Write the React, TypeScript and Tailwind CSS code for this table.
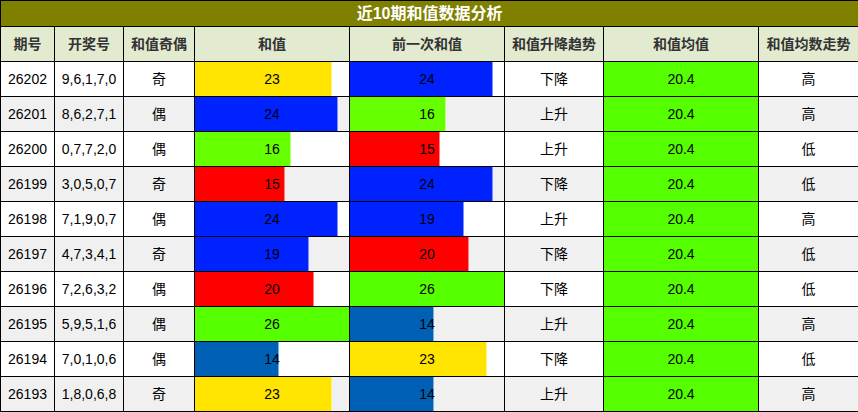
const rows = [
  { qh: "26202", kj: "9,6,1,7,0", jo: "奇", hz: 23, prev: 24, trend: "下降", avg: "20.4", hl: "高" },
  { qh: "26201", kj: "8,6,2,7,1", jo: "偶", hz: 24, prev: 16, trend: "上升", avg: "20.4", hl: "高" },
  { qh: "26200", kj: "0,7,7,2,0", jo: "偶", hz: 16, prev: 15, trend: "上升", avg: "20.4", hl: "低" },
  { qh: "26199", kj: "3,0,5,0,7", jo: "奇", hz: 15, prev: 24, trend: "下降", avg: "20.4", hl: "低" },
  { qh: "26198", kj: "7,1,9,0,7", jo: "偶", hz: 24, prev: 19, trend: "上升", avg: "20.4", hl: "高" },
  { qh: "26197", kj: "4,7,3,4,1", jo: "奇", hz: 19, prev: 20, trend: "下降", avg: "20.4", hl: "低" },
  { qh: "26196", kj: "7,2,6,3,2", jo: "偶", hz: 20, prev: 26, trend: "下降", avg: "20.4", hl: "低" },
  { qh: "26195", kj: "5,9,5,1,6", jo: "偶", hz: 26, prev: 14, trend: "上升", avg: "20.4", hl: "高" },
  { qh: "26194", kj: "7,0,1,0,6", jo: "偶", hz: 14, prev: 23, trend: "下降", avg: "20.4", hl: "低" },
  { qh: "26193", kj: "1,8,0,6,8", jo: "奇", hz: 23, prev: 14, trend: "上升", avg: "20.4", hl: "高" },
];

const barColor: Record<number, string> = {
  14: "bg-[#0060b6]",
  15: "bg-[#ff0000]",
  16: "bg-[#66ff00]",
  19: "bg-[#0022ff]",
  20: "bg-[#ff0000]",
  23: "bg-[#ffe400]",
  24: "bg-[#0022ff]",
  26: "bg-[#55ff00]",
};

const MAX = 26;

function BarCell({ value }: { value: number }) {
  return (
    <td className="border border-black p-0">
      <div className="relative h-[34px] flex items-center justify-center overflow-hidden">
        <div
          className={`absolute left-0 top-0 bottom-0 border-r border-white/50 ${barColor[value]}`}
          style={{ width: `calc(${(value / MAX) * 100}% + 1px)` }}
        />
        <span className="relative">{value}</span>
      </div>
    </td>
  );
}

const heads = ["期号", "开奖号", "和值奇偶", "和值", "前一次和值", "和值升降趋势", "和值均值", "和值均数走势"];

export default function App() {
  return (
    <div className="w-[858px] h-[412px] bg-white font-['Liberation_Sans','Noto_Sans_CJK_SC',sans-serif]">
      <table className="w-[858px] table-fixed border-collapse text-[14px] text-black text-center">
        <colgroup>
          <col className="w-[54px]" />
          <col className="w-[69px]" />
          <col className="w-[71px]" />
          <col className="w-[155px]" />
          <col className="w-[155px]" />
          <col className="w-[99px]" />
          <col className="w-[155px]" />
          <col className="w-[100px]" />
        </colgroup>
        <thead>
          <tr>
            <th colSpan={8} className="border border-black bg-[#808000] text-white text-[16px] font-bold h-[26px] p-0 leading-[25px]">
              近10期和值数据分析
            </th>
          </tr>
          <tr>
            {heads.map((h) => (
              <th key={h} className="border border-black bg-[#e2ebcf] text-[#333] font-bold h-[35px] p-0">
                {h}
              </th>
            ))}
          </tr>
        </thead>
        <tbody>
          {rows.map((r, i) => (
            <tr key={r.qh} className={i % 2 === 0 ? "bg-white" : "bg-[#f0f0f0]"}>
              <td className="border border-black p-0 h-[35px]">{r.qh}</td>
              <td className="border border-black p-0">{r.kj}</td>
              <td className="border border-black p-0">{r.jo}</td>
              <BarCell value={r.hz} />
              <BarCell value={r.prev} />
              <td className="border border-black p-0">{r.trend}</td>
              <td className="border border-black p-0 bg-[#55ff00]">{r.avg}</td>
              <td className="border border-black p-0">{r.hl}</td>
            </tr>
          ))}
        </tbody>
      </table>
    </div>
  );
}
